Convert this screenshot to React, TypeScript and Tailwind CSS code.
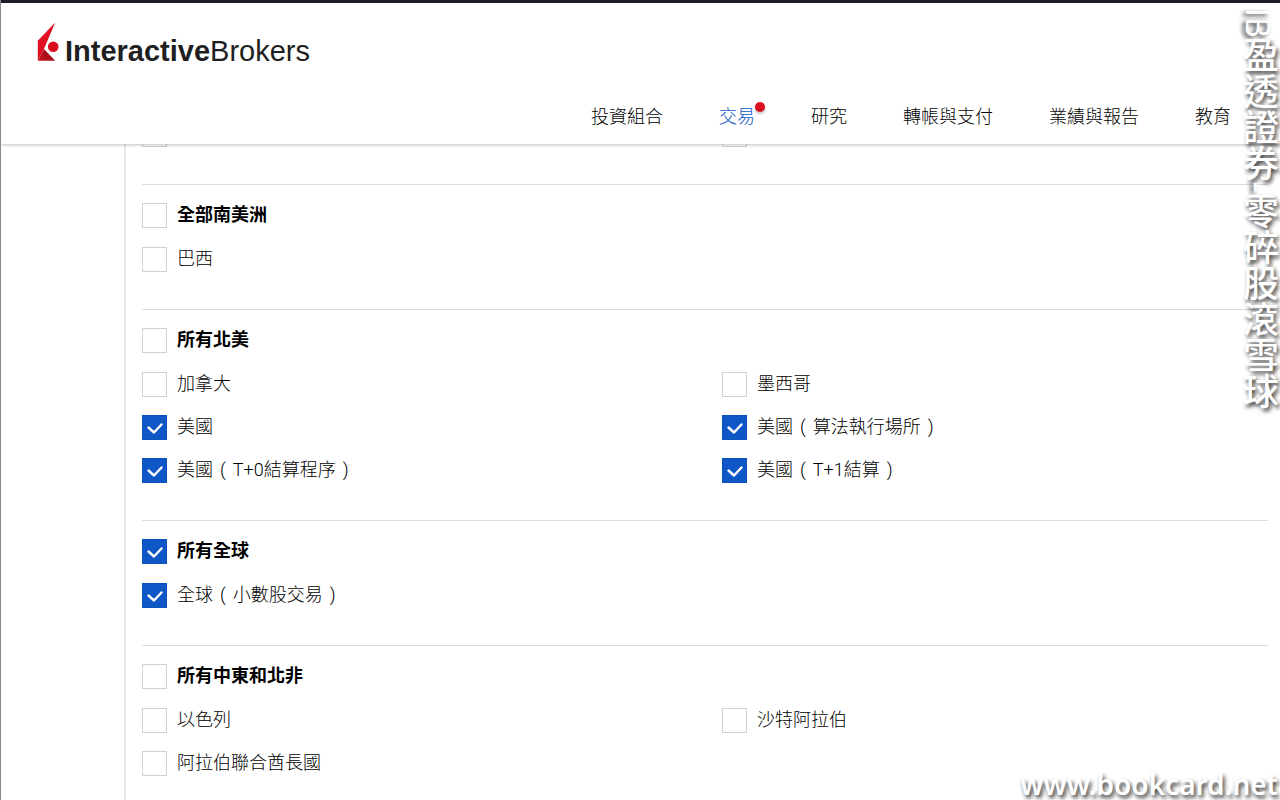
import React, { useState } from 'react';

type Region = {
  id: string;
  title: string;
  markets: { id: string; name: string; note?: string }[];
};

const NAVIGATION_ITEMS = [
  { label: '投資組合', href: '#portfolio' },
  { label: '交易', href: '#trade', active: true },
  { label: '研究', href: '#research' },
  { label: '轉帳與支付', href: '#transfer' },
  { label: '業績與報告', href: '#performance' },
  { label: '教育', href: '#education' },
];

const REGIONS: Region[] = [
  {
    id: 'south-america',
    title: '全部南美洲',
    markets: [{ id: 'brazil', name: '巴西' }],
  },
  {
    id: 'north-america',
    title: '所有北美',
    markets: [
      { id: 'canada', name: '加拿大' },
      { id: 'mexico', name: '墨西哥' },
      { id: 'us', name: '美國' },
      { id: 'us-algo', name: '美國', note: '算法執行場所' },
      { id: 'us-t0', name: '美國', note: 'T+0結算程序' },
      { id: 'us-t1', name: '美國', note: 'T+1結算' },
    ],
  },
  {
    id: 'global',
    title: '所有全球',
    markets: [{ id: 'global-fractions', name: '全球', note: '小數股交易' }],
  },
  {
    id: 'mena',
    title: '所有中東和北非',
    markets: [
      { id: 'israel', name: '以色列' },
      { id: 'saudi', name: '沙特阿拉伯' },
      { id: 'uae', name: '阿拉伯聯合酋長國' },
    ],
  },
];

const Logo = () => (
  <a href="#home" className="flex items-end text-[29px] leading-8 text-[#1f1f22] font-['Liberation_Sans',sans-serif]">
    <svg className="mr-[6px] mb-[6px] h-[39px] w-[22px]" viewBox="0 0 22 39" aria-hidden="true">
      <defs>
        <linearGradient id="fold" x1="0" y1="1" x2="1" y2="0.4">
          <stop offset="0" stopColor="#d5101f" />
          <stop offset="1" stopColor="#8f0d1b" />
        </linearGradient>
      </defs>
      <path d="M18.2 0.5 0.8 18.7V38.7L7 27z" fill="#e01022" />
      <path d="M0.8 38.7H18.2L7 27z" fill="url(#fold)" />
      <circle cx="16.2" cy="24.7" r="5.3" fill="#d90f20" />
    </svg>
    <span className="font-bold">Interactive</span>
    <span>Brokers</span>
  </a>
);

const Header = () => (
  <header className="relative z-10 flex h-[144px] flex-col justify-between border-t-[3px] border-[#1c1c2b] bg-white pt-[19px] pb-[14px] shadow-[0_1px_3px_rgba(0,0,0,0.25)]">
    <div className="flex pl-9">
      <Logo />
    </div>
    <nav className="flex justify-end gap-14 pr-[49px]">
      {NAVIGATION_ITEMS.map((item) => (
        <a
          key={item.label}
          href={item.href}
          className={`relative text-lg leading-[26px] ${item.active ? 'text-[#0f57c6]' : 'text-black'}`}
        >
          {item.label}
          {item.active && (
            <span className="absolute -top-[2px] -right-[10px] size-[10px] rounded-full bg-[#d90f20] shadow-[0_2px_3px_rgba(0,0,0,0.25)]" />
          )}
        </a>
      ))}
    </nav>
  </header>
);

type CheckboxProps = {
  id: string;
  label: string;
  note?: string;
  bold?: boolean;
  checked: boolean;
  onToggle: () => void;
};

const Checkbox = ({ id, label, note, bold, checked, onToggle }: CheckboxProps) => (
  <div className="flex h-[25px] items-center gap-[10px]">
    <span className="grid size-[25px] shrink-0">
      <input
        id={id}
        type="checkbox"
        checked={checked}
        onChange={onToggle}
        className="col-start-1 row-start-1 size-[25px] appearance-none border border-[#d3d1c8] bg-white checked:border-[#0d51bd] checked:bg-[#0f57c6]"
      />
      {checked && (
        <svg
          className="pointer-events-none col-start-1 row-start-1 size-[25px]"
          viewBox="0 0 25 25"
          fill="none"
          stroke="white"
          strokeWidth="2.4"
          strokeLinecap="round"
          strokeLinejoin="round"
        >
          <path d="M6.5 12.5l5.5 5 7.5-8" />
        </svg>
      )}
    </span>
    <label htmlFor={id} className={`pb-[2px] text-lg leading-[25px] text-black ${bold ? 'font-bold' : ''}`}>
      {label}
      {note && (
        <>
          <span className="px-[7px]">(</span>
          {note}
          <span className="px-[7px]">)</span>
        </>
      )}
    </label>
  </div>
);

const App = () => {
  const [selected, setSelected] = useState<string[]>([
    'us',
    'us-algo',
    'us-t0',
    'us-t1',
    'global',
    'global-fractions',
  ]);

  const toggle = (id: string) => {
    setSelected((prev) => (prev.includes(id) ? prev.filter((s) => s !== id) : [...prev, id]));
  };

  const renderCheckbox = (id: string, label: string, note?: string, bold = false) => (
    <Checkbox
      key={id}
      id={id}
      label={label}
      note={note}
      bold={bold}
      checked={selected.includes(id)}
      onToggle={() => toggle(id)}
    />
  );

  return (
    <div
      lang="zh-Hant"
      className="relative h-screen overflow-hidden border-l border-[#8a8a8a] bg-white font-['Roboto','Noto_Sans_CJK_TC',sans-serif] font-light"
    >
      <Header />

      {/* Market list, scrolled under the header */}
      <main className="-mt-[22px] ml-[123px] border-l-2 border-[#e8e8e8] pr-3 pl-4">
        <div className="grid grid-cols-2 gap-x-[34px] pb-[37px]">
          {renderCheckbox('previous-left', '')}
          {renderCheckbox('previous-right', '')}
        </div>

        {REGIONS.map((region) => (
          <section key={region.id} className="border-t border-[#dcdcdc] pt-[18px] pb-[37px]">
            {renderCheckbox(region.id, region.title, undefined, true)}
            <div className="mt-[19px] grid grid-cols-2 gap-x-[34px] gap-y-[18px]">
              {region.markets.map((market) => renderCheckbox(market.id, market.name, market.note))}
            </div>
          </section>
        ))}
      </main>

      {/* Watermarks */}
      <div className="pointer-events-none absolute top-2 right-1 z-20 text-4xl leading-[36px] font-medium whitespace-nowrap text-white [writing-mode:vertical-rl] [text-shadow:2px_3px_4px_rgba(0,0,0,0.8)] font-['Open_Sans','Noto_Sans_CJK_TC',sans-serif]">
        <span className="text-[32px]">IB</span>盈透證券-零碎股滾雪球
      </div>
      <div className="pointer-events-none absolute right-[2px] bottom-0 z-20 text-[28px] leading-8 font-semibold whitespace-nowrap text-white [text-shadow:2px_3px_4px_rgba(0,0,0,0.8)] font-['Noto_Sans',sans-serif]">
        www.bookcard.net
      </div>
    </div>
  );
};

export default App;
